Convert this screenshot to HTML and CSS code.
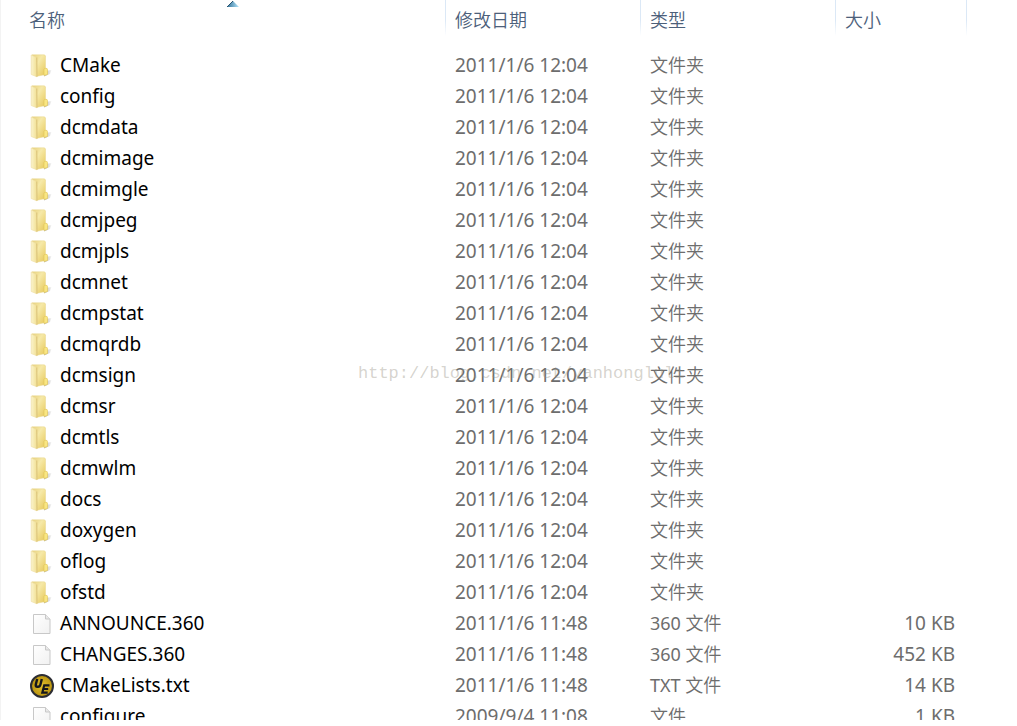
FILE: index.html
```
<!DOCTYPE html>
<html lang="zh-CN">
<head>
    <meta charset="UTF-8">
    <meta name="viewport" content="width=device-width, initial-scale=1.0">
    <title>文件列表</title>
    <link rel="stylesheet" href="styles.css">
</head>
<body>
    <svg class="defs" aria-hidden="true">
        <defs>
            <linearGradient id="flap" x1="0" x2="1" y1="0" y2="0">
                <stop offset="0" stop-color="#fbf4cc"/>
                <stop offset="1" stop-color="#f1df92"/>
            </linearGradient>
            <linearGradient id="back" x1="0" x2="1" y1="0" y2="1">
                <stop offset="0" stop-color="#e9d17c"/>
                <stop offset=".4" stop-color="#f6e9a8"/>
                <stop offset="1" stop-color="#e6c757"/>
            </linearGradient>
            <linearGradient id="shade" x1="0" x2="1" y1="0" y2="0">
                <stop offset="0" stop-color="#b5b5b0"/>
                <stop offset="1" stop-color="#f4f4f4"/>
            </linearGradient>
            <linearGradient id="sheet" x1="0" x2="1" y1="0" y2="1">
                <stop offset="0" stop-color="#fff"/>
                <stop offset="1" stop-color="#f1f1f1"/>
            </linearGradient>
            <radialGradient id="gold">
                <stop offset="0" stop-color="#e3c02c"/>
                <stop offset="1" stop-color="#b8920f"/>
            </radialGradient>
            <linearGradient id="arrow" x1="0" x2="1" y1="0" y2="0">
                <stop offset="0" stop-color="#2f6f96"/>
                <stop offset="1" stop-color="#b5e6fb"/>
            </linearGradient>
        </defs>
        <symbol id="icon-folder" viewBox="0 0 24 24">
            <path d="M15 17l6.500-1-1.500 4-6 2.500z" fill="url(#shade)"/>
            <path d="M2 .8L14 .8q1.500.2 1.500 1.500V20.500L6 22.500z" fill="url(#back)" stroke="#e8d68c" stroke-width=".5"/>
            <path d="M14 15.500q0-1.200 1.800-1.200t1.700 1.200v5l-3.500 1z" fill="#f9e682" stroke="#dfc354" stroke-width=".6"/>
            <path d="M1.200 1L6.500 3.500 7 22.800 1.200 20.500z" fill="url(#flap)" stroke="#ecdca0" stroke-width=".6"/>
            <path d="M6.800 3.500L7 22.600" stroke="#d4ba6c" stroke-width=".8"/>
        </symbol>
        <symbol id="icon-file" viewBox="0 0 24 24">
            <path d="M3.500 2.500h12l4.500 4.500v14.500h-16.500z" fill="url(#sheet)" stroke="#c8c8c8"/>
            <path d="M15.500 2.500v4.500h4.500" fill="#e8e8e8" stroke="#c8c8c8"/>
        </symbol>
        <symbol id="icon-ue" viewBox="0 0 24 24">
            <circle cx="12" cy="12" r="11" fill="url(#gold)" stroke="#2c2d33" stroke-width="2"/>
            <path d="M7.200 5L5.800 10.500q-.4 2.300 1.500 2.300h.8q1.800 0 2.300-2L11.800 5" fill="none" stroke="#15161c" stroke-width="2.400"/>
            <path d="M19.500 11.300h-5.300l-1.900 7.400h5.400M13.500 15h4.700" fill="none" stroke="#15161c" stroke-width="2.200"/>
        </symbol>
    </svg>

    <main class="file-list">
        <table class="files">
            <colgroup>
                <col>
                <col class="col-date">
                <col class="col-type">
                <col class="col-size">
            </colgroup>
            <thead>
                <tr>
                    <th class="sorted" aria-sort="ascending">名称
                        <svg class="sort-arrow" viewBox="0 0 12 6" aria-hidden="true"><path d="M0 6L6 0l6 6z" fill="url(#arrow)"/><path d="M0 6L6 0" stroke="#2a5370"/></svg>
                    </th>
                    <th>修改日期</th>
                    <th>类型</th>
                    <th>大小</th>
                </tr>
            </thead>
            <tbody id="rows"></tbody>
        </table>
        <div class="watermark">http://blog.csdn.net/yanhongluli</div>
    </main>

    <script src="script.js"></script>
</body>
</html>
```
FILE: styles.css
```
body {
    font-family: "Noto Sans", "Noto Sans CJK SC DemiLight", "Noto Sans CJK SC", sans-serif;
    margin: 0;
    background-color: #fff;
}
.defs {
    position: absolute;
    width: 0;
    height: 0;
}
.file-list {
    position: relative;
    box-sizing: border-box;
    height: calc(100vh - 6px);
    padding-right: 50px;
    border-left: 1px solid #f3f3f3;
    overflow: hidden;
}
.files {
    width: 100%;
    table-layout: fixed;
    border-collapse: separate;
    border-spacing: 0;
}
.col-date,
.col-type {
    width: 195px;
}
.col-size {
    width: 131px;
}
th {
    position: relative;
    height: 50px;
    box-sizing: border-box;
    padding: 0 9px 10px;
    font-size: 18px;
    font-weight: 400;
    line-height: 24px;
    text-align: left;
    color: #4c607a;
    background: linear-gradient(#dbe8f6 20px, #fff 36px) right top / 1px 36px no-repeat;
}
.sorted {
    padding-left: 28px;
}
.sort-arrow {
    position: absolute;
    top: 1px;
    left: calc(50% + 3px);
    width: 12px;
    height: 6px;
}
td {
    height: 31px;
    padding: 0 9px;
    font-size: 19px;
    line-height: 31px;
    color: #6d6d6d;
    white-space: nowrap;
}
.name {
    display: flex;
    align-items: center;
    gap: 6px;
    padding-left: 29px;
    color: #000;
}
.icon {
    width: 24px;
    height: 24px;
}
.type {
    font-size: 18px;
}
.size {
    padding-right: 12px;
    text-align: right;
}
.watermark {
    position: absolute;
    top: 362px;
    left: 357px;
    font-family: "Liberation Mono", monospace;
    font-size: 17px;
    line-height: 24px;
    color: rgba(150, 145, 130, 0.4);
    pointer-events: none;
}
```
FILE: script.js
```
const folders = [
    'CMake', 'config', 'dcmdata', 'dcmimage', 'dcmimgle', 'dcmjpeg',
    'dcmjpls', 'dcmnet', 'dcmpstat', 'dcmqrdb', 'dcmsign', 'dcmsr',
    'dcmtls', 'dcmwlm', 'docs', 'doxygen', 'oflog', 'ofstd'
];

const files = [
    { icon: 'file', name: 'ANNOUNCE.360', date: '2011/1/6 11:48', type: '360 文件', size: '10 KB' },
    { icon: 'file', name: 'CHANGES.360', date: '2011/1/6 11:48', type: '360 文件', size: '452 KB' },
    { icon: 'ue', name: 'CMakeLists.txt', date: '2011/1/6 11:48', type: 'TXT 文件', size: '14 KB' },
    { icon: 'file', name: 'configure', date: '2009/9/4 11:08', type: '文件', size: '1 KB' }
];

const items = folders
    .map((name) => ({ icon: 'folder', name, date: '2011/1/6 12:04', type: '文件夹', size: '' }))
    .concat(files);

document.getElementById('rows').innerHTML = items.map((item) => `
    <tr>
        <td class="name"><svg class="icon" aria-hidden="true"><use href="#icon-${item.icon}"/></svg>${item.name}</td>
        <td class="date">${item.date}</td>
        <td class="type">${item.type}</td>
        <td class="size">${item.size}</td>
    </tr>`).join('');
```
